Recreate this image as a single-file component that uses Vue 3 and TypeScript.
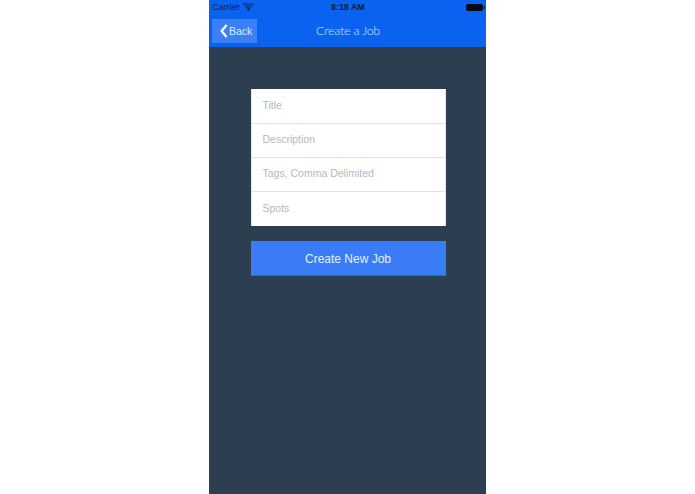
<script setup lang="ts">
const fields: string[] = ['Title', 'Description', 'Tags, Comma Delimited', 'Spots']
</script>

<template>
  <div class="page">
    <div class="phone">
      <header class="header">
        <div class="status">
          <div class="status-left">
            <span>Carrier</span>
            <svg class="wifi" width="11" height="8" viewBox="0 0 11 8">
              <path d="M5.5 8 3.9 5.9a2.7 2.7 0 0 1 3.2 0Z" fill="#0a1c3f" />
              <path d="M3 4.9a4.2 4.2 0 0 1 5 0" fill="none" stroke="#0a1c3f" stroke-width="1" />
              <path d="M1.6 3.2a6.5 6.5 0 0 1 7.8 0" fill="none" stroke="#0a1c3f" stroke-width="1" />
              <path d="M.3 1.6a8.7 8.7 0 0 1 10.4 0" fill="none" stroke="#0a1c3f" stroke-width="1" />
            </svg>
          </div>
          <span class="time">8:18 AM</span>
          <div class="battery"><i></i></div>
        </div>
        <div class="nav">
          <button class="back">
            <svg width="8" height="14" viewBox="0 0 8 14">
              <path d="M6.6 1 1.6 7l5 6" fill="none" stroke="#fff" stroke-width="2.2" />
            </svg>
            <span>Back</span>
          </button>
          <div class="title">Create a Job</div>
        </div>
      </header>
      <main class="body">
        <div class="card">
          <div v-for="f in fields" :key="f" class="field">{{ f }}</div>
        </div>
        <button class="submit">Create New Job</button>
      </main>
    </div>
  </div>
</template>

<style>
html, body { margin: 0; background: #fff; }
</style>

<style scoped>
.page { width: 695px; height: 494px; display: flex; justify-content: center; font-family: "Liberation Sans", Arial, sans-serif; overflow: hidden; }
.phone { width: 277px; height: 494px; display: flex; flex-direction: column; background: #2e3e51; }
.header { height: 47px; background: #0a63f0; flex: none; }
.status { height: 14px; display: flex; align-items: center; justify-content: space-between; padding: 0 3px; font-size: 9.2px; color: #0a1c3f; position: relative; }
.status-left { display: flex; align-items: center; gap: 3px; color: #0a1c3f; }
.time { position: absolute; left: 122px; font-weight: 700; font-size: 8.9px; }
.battery { width: 17px; height: 7px; background: #050a14; border-radius: 2px; position: relative; }
.battery i { position: absolute; right: -2px; top: 2px; width: 1px; height: 3px; background: #0a1c3f; }
.nav { height: 33px; display: flex; align-items: center; padding-left: 3px; position: relative; }
.back { width: 45px; height: 24px; background: #3a80f6; border: 0; padding: 0 0 0 8px; display: flex; align-items: center; gap: 1px; color: #dfeafc; font: 10.5px "Liberation Sans", Arial, sans-serif; }
.title { position: absolute; left: 107px; top: 9px; font: 300 12.5px "Lato", sans-serif; color: #d3e2fc; letter-spacing: -0.25px; }
.body { display: flex; flex-direction: column; align-items: center; padding: 42px 0 0 1px; }
.card { width: 195px; background: #fff; box-sizing: border-box; border: 1px solid #e4e8ec; border-width: 0 1px; }
.field { height: 34px; box-sizing: border-box; border-bottom: 1px solid #dfe2e6; padding: 0 11px 3px; display: flex; align-items: center; font-size: 10.5px; color: #b8b8b8; }
.field:first-child { height: 35px; padding-bottom: 2px; }
.field:last-child { border-bottom: 0; padding-bottom: 2px; }
.submit { width: 195px; height: 35px; margin-top: 15px; background: #3a7cf5; border: 0; border-bottom: 1px solid #2a66d8; color: #e6effd; font: 12px "Liberation Sans", Arial, sans-serif; padding: 1px 0 0; }
</style>
